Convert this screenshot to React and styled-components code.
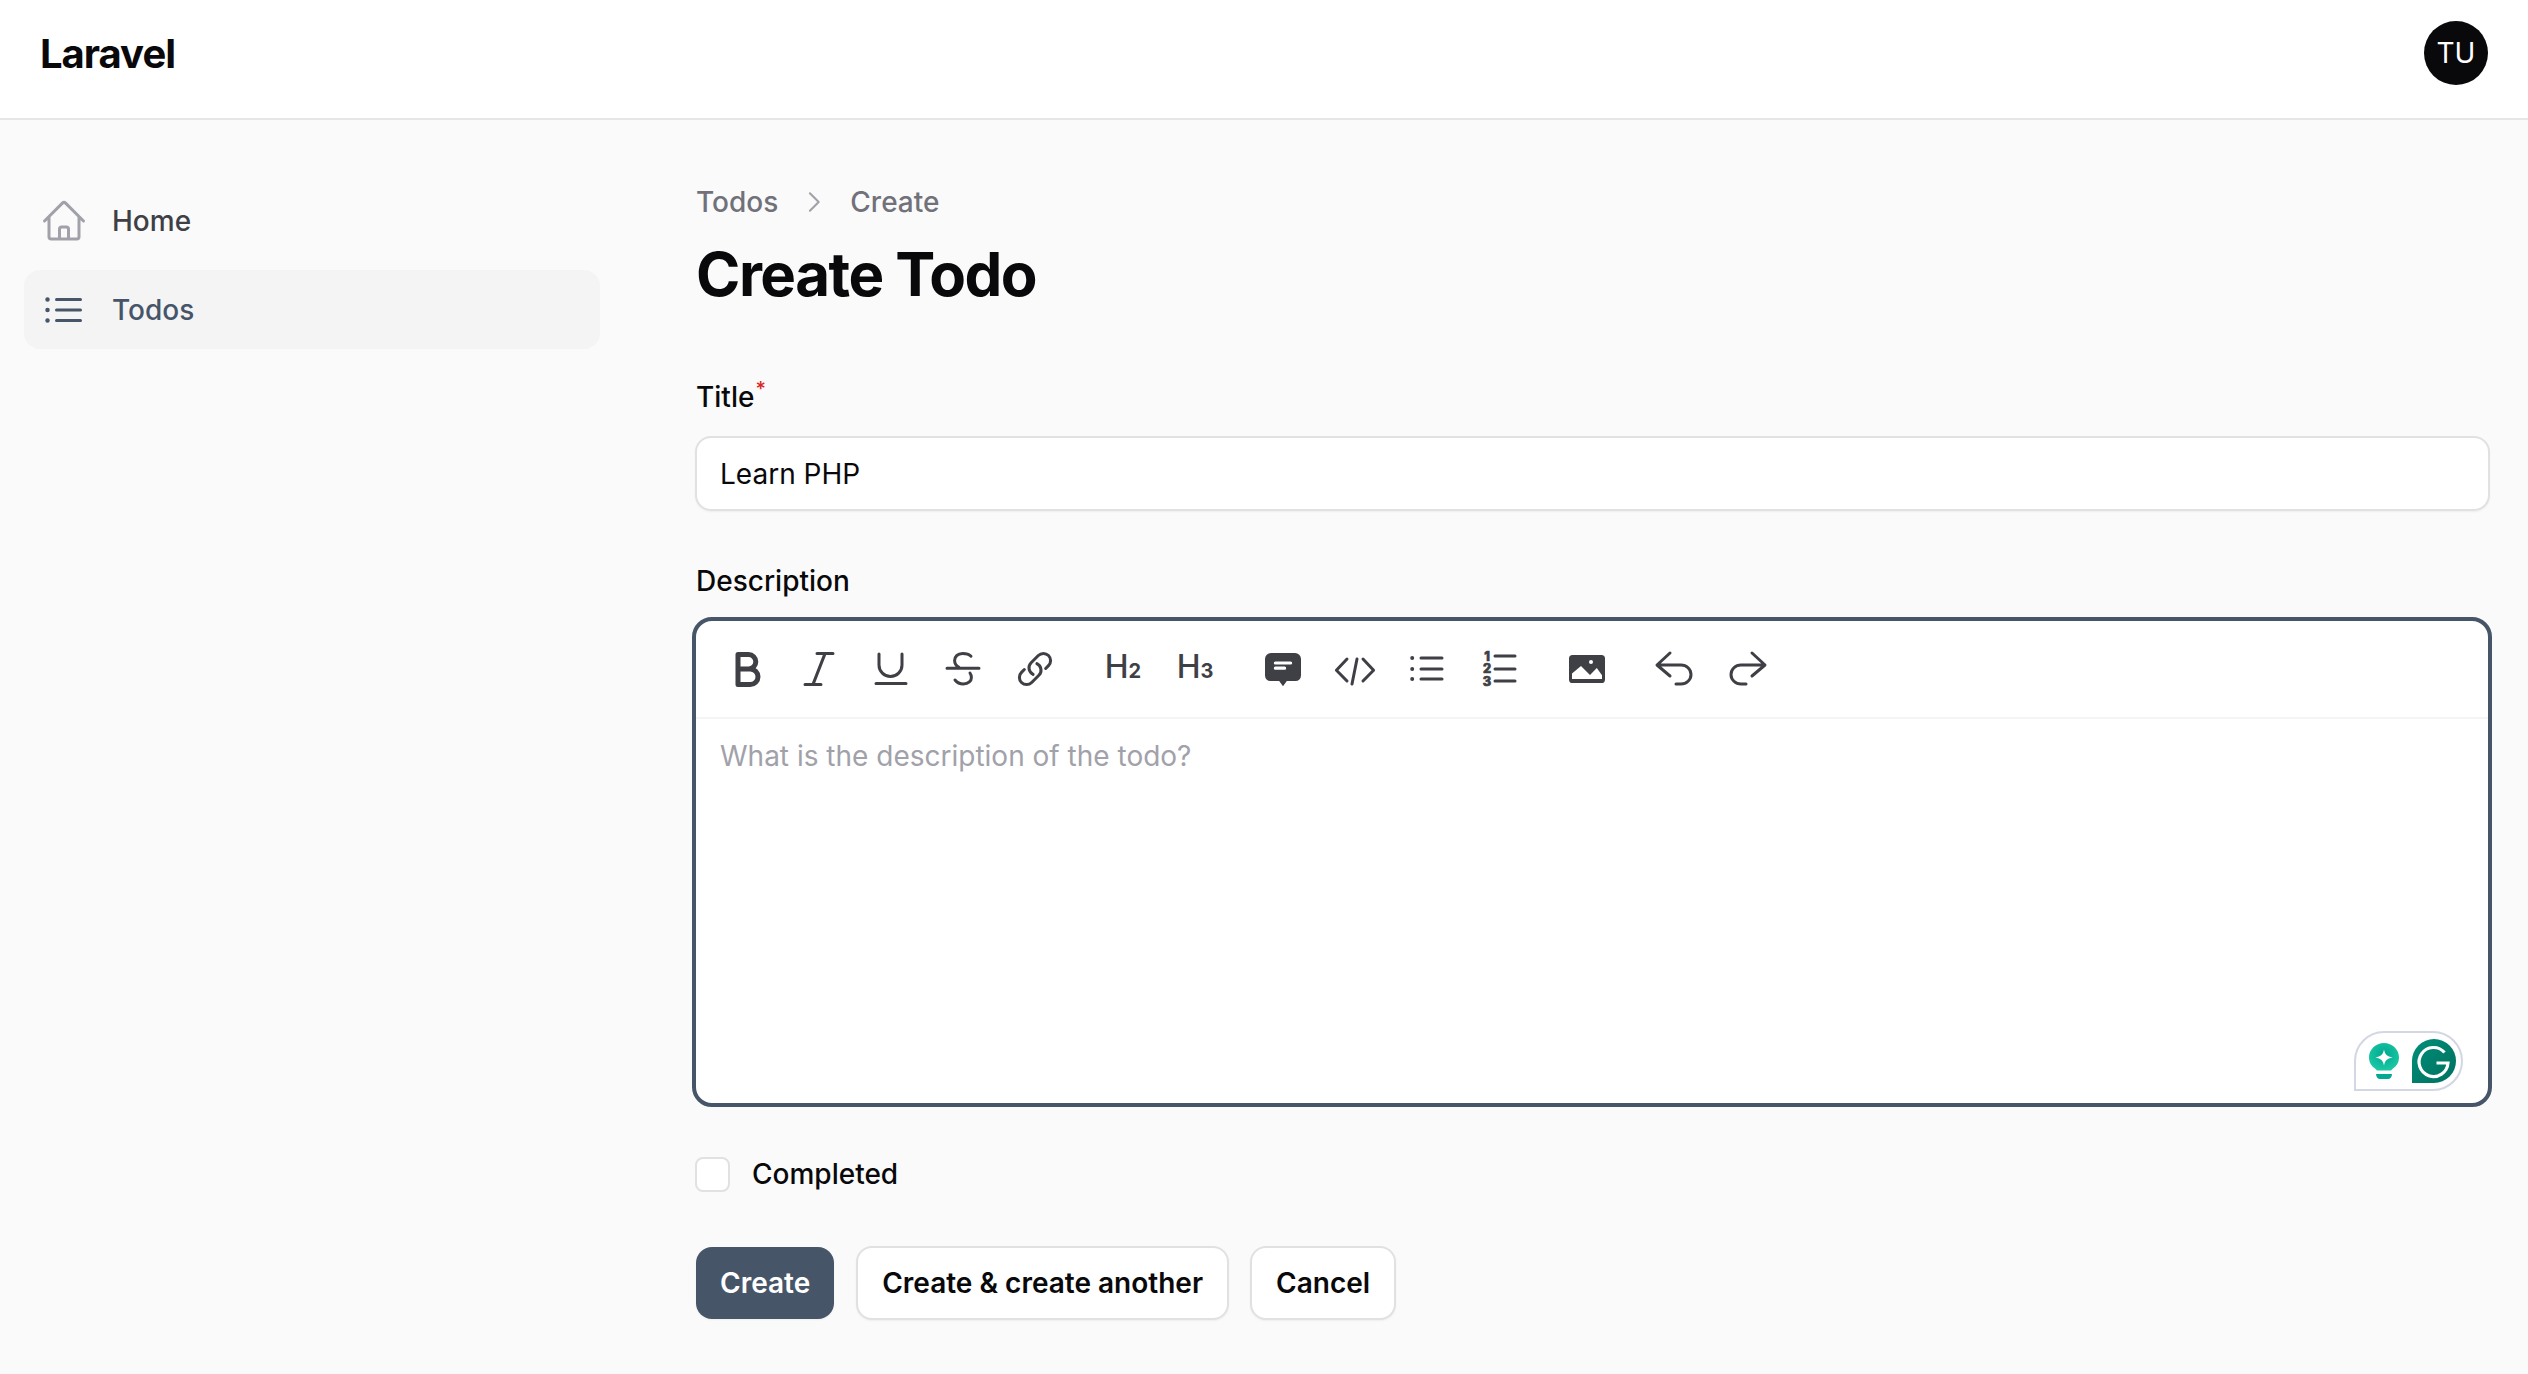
import React from 'react';
import styled, { createGlobalStyle } from 'styled-components';

const GlobalStyle = createGlobalStyle`
  * {
    box-sizing: border-box;
  }
  html, body {
    margin: 0;
    padding: 0;
    background: #fafafa;
    font-family: Inter, "Liberation Sans", sans-serif;
    color: #09090b;
  }
`;

const Page = styled.div`
  height: 1374px;
  overflow: hidden;
  display: flex;
  flex-direction: column;
`;

const Topbar = styled.header`
  height: 120px;
  flex: none;
  background: #fff;
  border-bottom: 2px solid #e6e6e7;
  display: flex;
  align-items: center;
  justify-content: space-between;
  padding: 0 40px 12px;
`;

const Brand = styled.div`
  font-size: 40px;
  font-weight: 700;
  letter-spacing: -1px;
  line-height: 48px;
  padding-top: 1px;
`;

const Avatar = styled.div`
  width: 64px;
  height: 64px;
  border-radius: 50%;
  background: #09090b;
  color: #fff;
  font-size: 28px;
  display: flex;
  align-items: center;
  justify-content: center;
`;

const Body = styled.div`
  flex: 1;
  display: flex;
`;

const Sidebar = styled.nav`
  width: 696px;
  flex: none;
  padding: 61px 96px 0 24px;
  display: flex;
  flex-direction: column;
  gap: 10px;
`;

const NavItem = styled.a`
  height: 79px;
  border-radius: 16px;
  padding-left: 16px;
  display: flex;
  align-items: center;
  gap: 24px;
  font-size: 28px;
  font-weight: 500;
  background: ${(p) => (p.$active ? '#f4f4f5' : 'transparent')};
  color: ${(p) => (p.$active ? '#475569' : '#3f3f46')};

  svg {
    color: ${(p) => (p.$active ? '#475569' : '#a1a1aa')};
  }
`;

const Main = styled.main`
  flex: 1;
  min-width: 0;
  padding: 62px 38px 0 0;
`;

const Breadcrumbs = styled.div`
  height: 40px;
  display: flex;
  align-items: center;
  gap: 22px;
  font-size: 28px;
  font-weight: 500;
  color: #71717a;

  svg {
    color: #a1a1aa;
  }
`;

const Heading = styled.h1`
  margin: 16px 0 67px;
  font-size: 60px;
  line-height: 72px;
  font-weight: 700;
  letter-spacing: -1.5px;
`;

const Label = styled.div`
  font-size: 28px;
  font-weight: 500;
  line-height: 40px;
  margin-bottom: ${(p) => p.$gap}px;
`;

const Required = styled.sup`
  color: #dc2626;
  font-size: 20px;
  line-height: 0;
  vertical-align: 11px;
  margin-left: 1px;
`;

const TextInput = styled.div`
  height: 75px;
  margin: 0 0 50px -1px;
  background: #fff;
  border: 2px solid #e1e1e3;
  border-radius: 16px;
  padding: 0 23px;
  display: flex;
  align-items: center;
  font-size: 28px;
  box-shadow: 0 1px 2px rgba(0, 0, 0, 0.05);
`;

const Editor = styled.div`
  position: relative;
  height: 490px;
  margin-left: -4px;
  margin-right: -2px;
  background: #fff;
  border: 4px solid #475569;
  border-radius: 20px;
`;

const Toolbar = styled.div`
  height: 98px;
  padding: 0 23px;
  border-bottom: 2px solid #f4f4f5;
  display: flex;
  align-items: center;
  gap: 32px;
`;

const ToolGroup = styled.div`
  display: flex;
  gap: 16px;
`;

const ToolButton = styled.div`
  width: 56px;
  height: 48px;
  display: flex;
  align-items: center;
  justify-content: center;
  color: #3f3f46;
`;

const HeadingGlyph = styled.span`
  display: flex;
  align-items: baseline;
  font-size: 32px;
  font-weight: 500;
  line-height: 48px;
  color: #3f3f46;

  small {
    font-size: 20px;
    font-weight: 700;
  }
`;

const Placeholder = styled.div`
  padding: 17px 24px;
  font-size: 28px;
  line-height: 40px;
  color: #a1a1aa;
`;

const GrammarlyBadge = styled.div`
  position: absolute;
  right: 25px;
  bottom: 12px;
  width: 109px;
  height: 60px;
  background: #fff;
  border: 2px solid #d3d6e3;
  border-radius: 30px 30px 30px 0;
  padding-left: 13px;
  display: flex;
  align-items: center;
  gap: 13px;
`;

const CheckRow = styled.label`
  margin: 49px 0 54px -1px;
  height: 36px;
  display: flex;
  align-items: center;
  gap: 22px;
  font-size: 28px;
  font-weight: 500;
`;

const CheckBox = styled.span`
  width: 35px;
  height: 35px;
  background: #fff;
  border: 2px solid #e1e1e3;
  border-radius: 8px;
`;

const Actions = styled.div`
  display: flex;
  align-items: center;
  gap: 22px;
`;

const Button = styled.button`
  height: ${(p) => (p.$primary ? 72 : 74)}px;
  padding: 0 24px;
  margin-left: ${(p) => (p.$tight ? -1 : 0)}px;
  border-radius: 16px;
  border: ${(p) => (p.$primary ? 'none' : '2px solid #e1e1e3')};
  background: ${(p) => (p.$primary ? '#475569' : '#fff')};
  color: ${(p) => (p.$primary ? '#fff' : '#09090b')};
  font: 600 28px Inter, "Liberation Sans", sans-serif;
  box-shadow: 0 1px 2px rgba(0, 0, 0, 0.05);
`;

function Icon({ children, size = 48, fill = 'none', width = 1.5 }) {
  return (
    <svg
      width={size}
      height={size}
      viewBox="0 0 24 24"
      fill={fill}
      stroke={fill === 'none' ? 'currentColor' : 'none'}
      strokeWidth={width}
      strokeLinecap="round"
      strokeLinejoin="round"
    >
      {children}
    </svg>
  );
}

const homePath =
  'm2.25 12 8.954-8.955c.44-.439 1.152-.439 1.591 0L21.75 12M4.5 9.75v10.125c0 .621.504 1.125 1.125 1.125H9.75v-4.875c0-.621.504-1.125 1.125-1.125h2.25c.621 0 1.125.504 1.125 1.125V21h4.125c.621 0 1.125-.504 1.125-1.125V9.75M8.25 21h8.25';
const listPath =
  'M8.25 6.75h12M8.25 12h12m-12 5.25h12M3.75 6.75h.007v.008H3.75V6.75Zm.375 0a.375.375 0 1 1-.75 0 .375.375 0 0 1 .75 0ZM3.75 12h.007v.008H3.75V12Zm.375 0a.375.375 0 1 1-.75 0 .375.375 0 0 1 .75 0Zm-.375 5.25h.007v.008H3.75v-.008Zm.375 0a.375.375 0 1 1-.75 0 .375.375 0 0 1 .75 0Z';
const linkPath =
  'M13.19 8.688a4.5 4.5 0 0 1 1.242 7.244l-4.5 4.5a4.5 4.5 0 0 1-6.364-6.364l1.757-1.757m13.35-.622 1.757-1.757a4.5 4.5 0 0 0-6.364-6.364l-4.5 4.5a4.5 4.5 0 0 0 1.242 7.244';

const BoldIcon = () => (
  <Icon width={2.5}>
    <path d="M7.5 4.8h5.3a3.6 3.6 0 0 1 0 7.2H7.5zM7.5 12h6.1a3.9 3.9 0 0 1 0 7.8H7.5z" />
  </Icon>
);
const ItalicIcon = () => (
  <Icon>
    <path d="M11 4.3h8M5 19.7h8M15 4.3 9 19.7" />
  </Icon>
);
const UnderlineIcon = () => (
  <Icon>
    <path d="M6 4.5V10a5.75 5.75 0 0 0 11.5 0V4.5M4.5 19.2h15" />
  </Icon>
);
const StrikeIcon = () => (
  <Icon>
    <path d="M16 5.6C15 4.6 13.4 4.2 11.8 4.2 9.2 4.2 7.8 6 7.8 7.7c0 1.6 1 2.8 2.2 3.5M4 11.6h16M8 17.5c1 1.3 2.5 2 4.2 2 2.6 0 4-1.6 4-3.3 0-.8-.2-1.5-.7-2.2" />
  </Icon>
);
const LinkIcon = () => (
  <Icon width={1.9}>
    <g transform="translate(2.4 2.4) scale(.8)">
      <path d={linkPath} />
    </g>
  </Icon>
);
const QuoteIcon = () => (
  <Icon fill="currentColor">
    <path d="M6 4h12a3 3 0 0 1 3 3v8.3a2.7 2.7 0 0 1-2.7 2.7h-4.4L12 20.6 10.1 18H5.7A2.7 2.7 0 0 1 3 15.3V7a3 3 0 0 1 3-3z" />
    <path d="M8.2 8.2h7.6a.8.8 0 0 1 0 1.6H8.2a.8.8 0 0 1 0-1.6zM8.2 10.8h4.6a.8.8 0 0 1 0 1.6H8.2a.8.8 0 0 1 0-1.6z" fill="#fff" />
  </Icon>
);
const CodeIcon = () => (
  <Icon>
    <path d="M8 7 2.7 12.6 8 18M16 7l5.3 5.6L16 18M13 7l-2.5 12.5" />
  </Icon>
);
const BulletIcon = () => (
  <Icon>
    <path d="M9 6.5h10.5M9 12h10.5M9 17h10.5" />
    <circle cx="4.6" cy="6.5" r="1" fill="currentColor" stroke="none" />
    <circle cx="4.6" cy="12" r="1" fill="currentColor" stroke="none" />
    <circle cx="4.6" cy="17" r="1" fill="currentColor" stroke="none" />
  </Icon>
);
const NumberIcon = () => (
  <Icon>
    <path d="M10 5.5h10M10 12h10M10 18h10" />
    <g fill="currentColor" stroke="currentColor" strokeWidth=".35" fontSize="6.4" fontWeight="800" fontFamily="Inter, sans-serif" textAnchor="middle">
      <text x="6" y="8">1</text>
      <text x="6" y="13.8">2</text>
      <text x="6" y="20.4">3</text>
    </g>
  </Icon>
);
const ImageIcon = () => (
  <Icon fill="currentColor">
    <rect x="3" y="5" width="18" height="14" rx="1.8" />
    <path d="M4.5 14.2 9 10.5l4.5 4.5 3.4-3.5 2.6 3.6V17h-15z" fill="#fff" />
    <circle cx="14" cy="8.5" r="1" fill="#fff" />
  </Icon>
);
const UndoIcon = () => (
  <Icon>
    <path d="M9.5 4 3 10l6.5 5.5M3.5 10H15a5 4.75 0 0 1 0 9.5h-2.5" />
  </Icon>
);
const RedoIcon = () => (
  <Icon>
    <path d="M14.5 4 21 10l-6.5 5.5M20.5 10H9a5 4.75 0 0 0 0 9.5h2.5" />
  </Icon>
);

const BulbMark = () => (
  <svg width="30" height="36" viewBox="0 0 30 36">
    <defs>
      <radialGradient id="bulbFill" cx="50%" cy="40%" r="60%">
        <stop offset="0%" stopColor="#00a98f" />
        <stop offset="100%" stopColor="#1cc8a6" />
      </radialGradient>
    </defs>
    <path d="M15 0C23.3 0 30 6.5 30 14.5 30 19.5 27.5 23 24 25.5L22 27.5H8L6 25.5C2.5 23 0 19.5 0 14.5 0 6.5 6.7 0 15 0z" fill="url(#bulbFill)" />
    <path d="M15 6.5c1 5 3 7 8.500 8-5.500 1-7.500 3-8.500 8-1-5-3-7-8.500-8 5.500-1 7.500-3 8.500-8z" fill="#fff" />
    <path d="M7 31h16c0 3-2 5-4 5h-8c-2 0-4-2-4-5z" fill="#00a98f" />
  </svg>
);

const GrammarlyMark = () => (
  <svg width="44" height="44" viewBox="0 0 44 44">
    <defs>
      <linearGradient id="gFill" x1="0" y1="0" x2="1" y2="1">
        <stop offset="0%" stopColor="#008f78" />
        <stop offset="100%" stopColor="#00705f" />
      </linearGradient>
    </defs>
    <path d="M22 0a22 22 0 0 1 0 44H0V22A22 22 0 0 1 22 0z" fill="url(#gFill)" />
    <path d="M32.5 13.5A14.5 14.5 0 1 0 36 24H24.5" fill="none" stroke="#fff" strokeWidth="3.2" />
  </svg>
);

const toolGroups = [
  [BoldIcon, ItalicIcon, UnderlineIcon, StrikeIcon, LinkIcon],
  ['2', '3'],
  [QuoteIcon, CodeIcon, BulletIcon, NumberIcon],
  [ImageIcon],
  [UndoIcon, RedoIcon],
];

export default function App() {
  return (
    <Page>
      <GlobalStyle />
      <Topbar>
        <Brand>Laravel</Brand>
        <Avatar>TU</Avatar>
      </Topbar>
      <Body>
        <Sidebar>
          <NavItem>
            <Icon><path d={homePath} /></Icon>
            Home
          </NavItem>
          <NavItem $active>
            <Icon><path d={listPath} /></Icon>
            Todos
          </NavItem>
        </Sidebar>
        <Main>
          <Breadcrumbs>
            Todos
            <Icon size={28} width={1.8}><path d="m8.5 4.5 7.5 7.5-7.5 7.5" /></Icon>
            Create
          </Breadcrumbs>
          <Heading>Create Todo</Heading>
          <Label $gap={19}>
            Title<Required>*</Required>
          </Label>
          <TextInput>Learn PHP</TextInput>
          <Label $gap={16}>Description</Label>
          <Editor>
            <Toolbar>
              {toolGroups.map((group, i) => (
                <ToolGroup key={i}>
                  {group.map((Tool, j) => (
                    <ToolButton key={j}>
                      {typeof Tool === 'string' ? (
                        <HeadingGlyph>H<small>{Tool}</small></HeadingGlyph>
                      ) : (
                        <Tool />
                      )}
                    </ToolButton>
                  ))}
                </ToolGroup>
              ))}
            </Toolbar>
            <Placeholder>What is the description of the todo?</Placeholder>
            <GrammarlyBadge>
              <BulbMark />
              <GrammarlyMark />
            </GrammarlyBadge>
          </Editor>
          <CheckRow>
            <CheckBox />
            Completed
          </CheckRow>
          <Actions>
            <Button $primary>Create</Button>
            <Button>Create &amp; create another</Button>
            <Button $tight>Cancel</Button>
          </Actions>
        </Main>
      </Body>
    </Page>
  );
}
